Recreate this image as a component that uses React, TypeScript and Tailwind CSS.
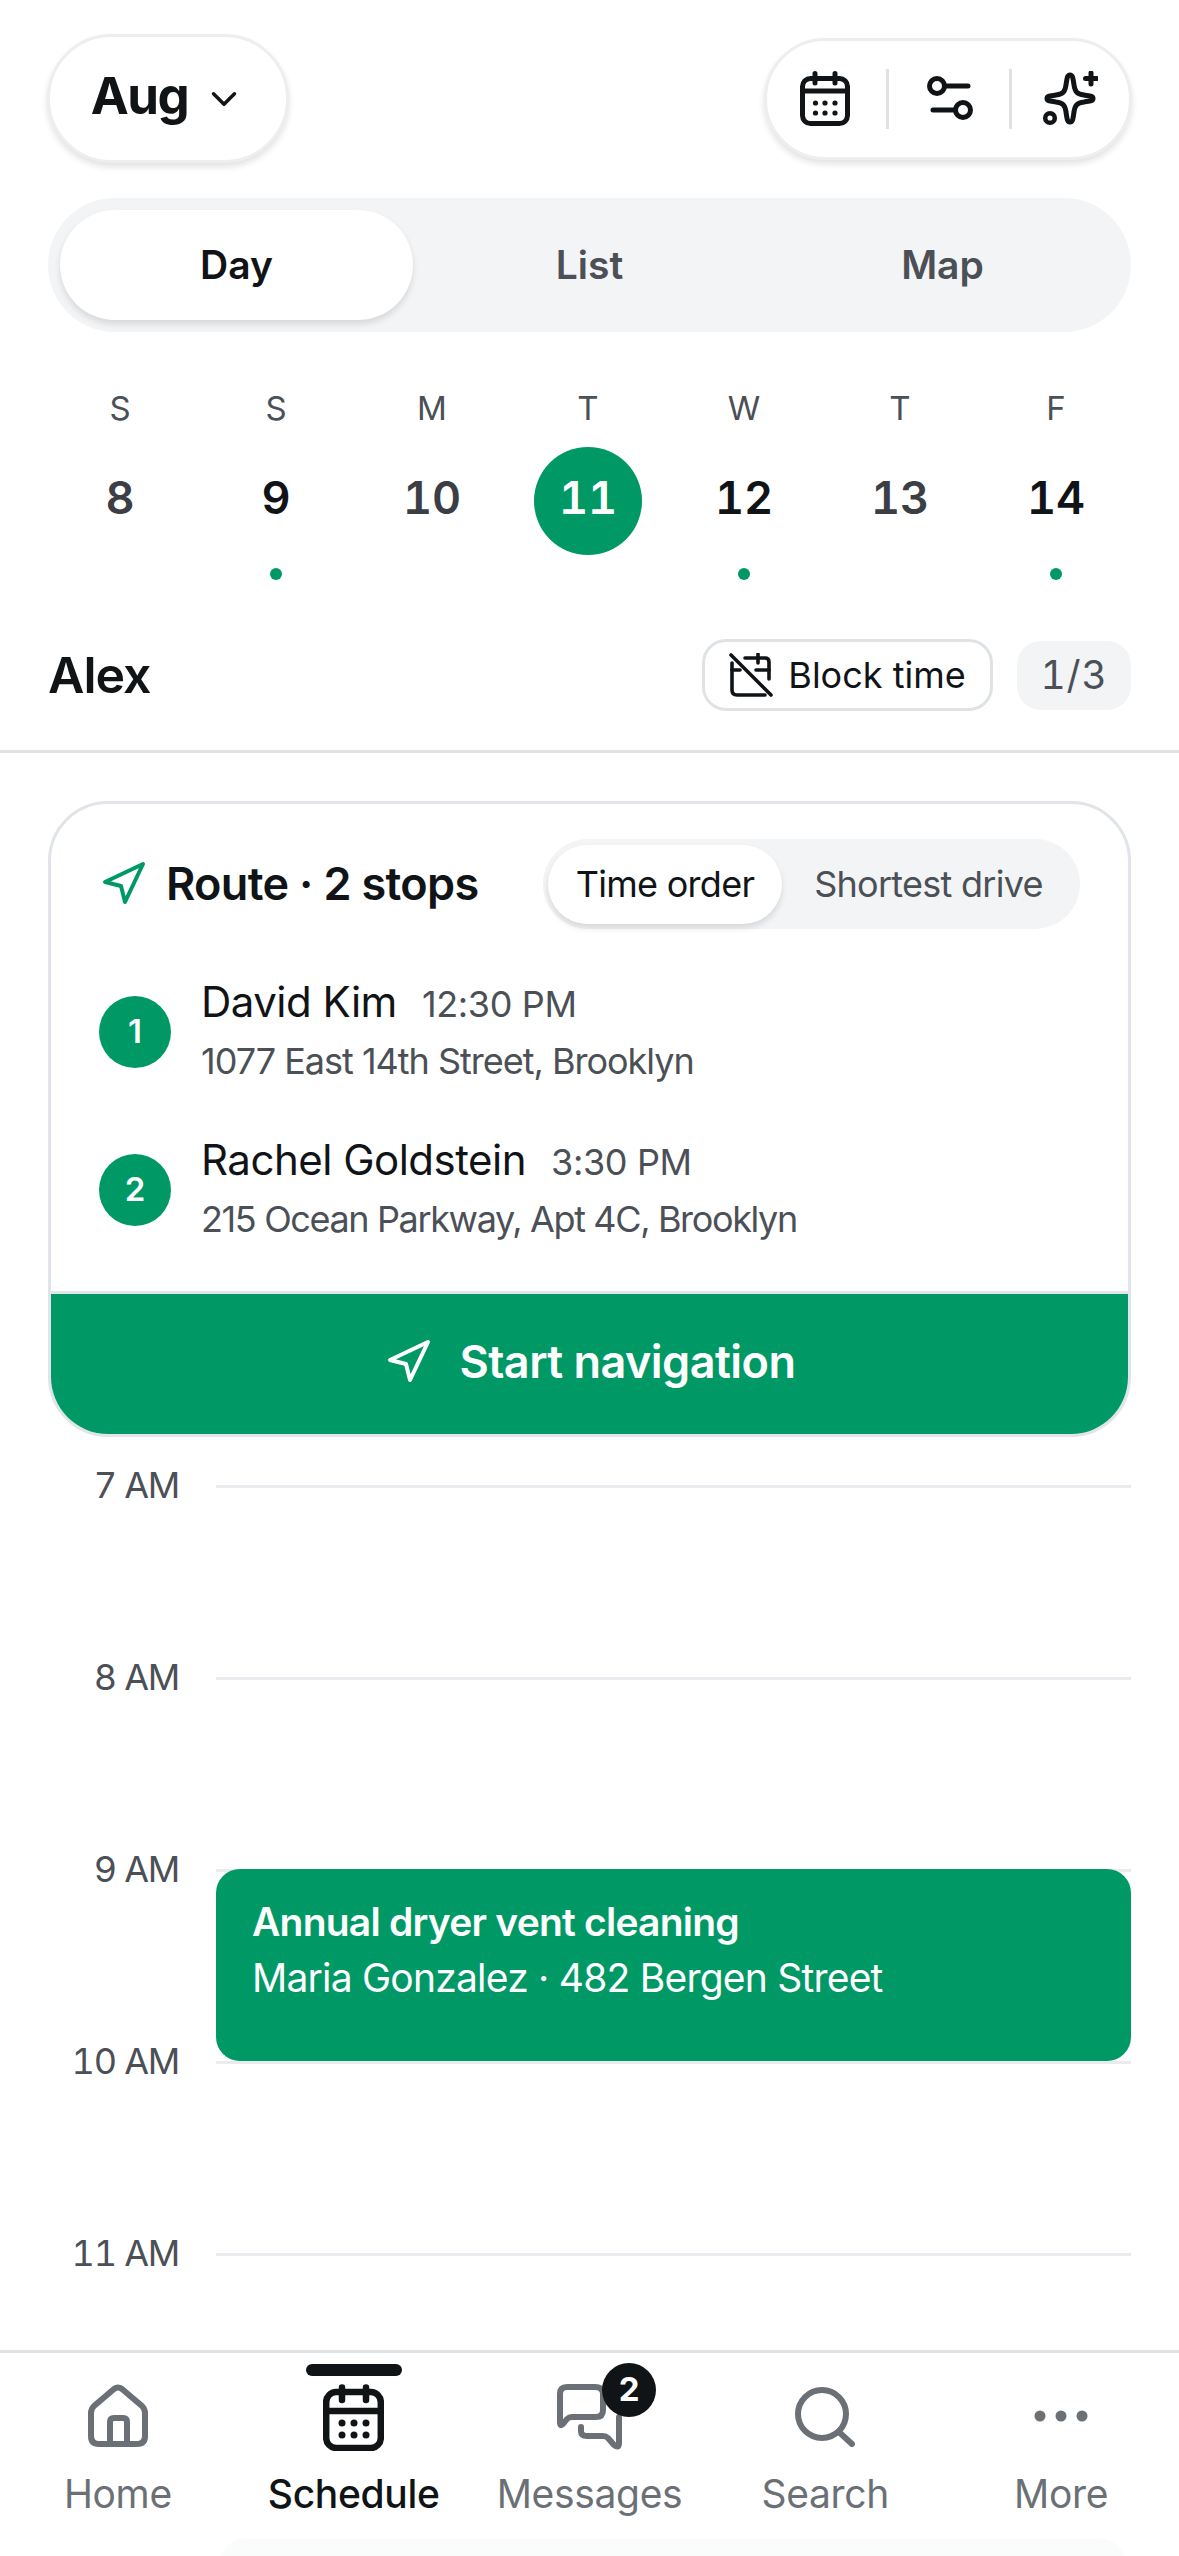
import {ChevronDown, Navigation} from 'lucide-react';

const days = [
    {letter: 'S', date: '8', strong: false, dot: false},
    {letter: 'S', date: '9', strong: true, dot: true},
    {letter: 'M', date: '10', strong: false, dot: false},
    {letter: 'T', date: '11', strong: false, dot: false, today: true},
    {letter: 'W', date: '12', strong: true, dot: true},
    {letter: 'T', date: '13', strong: false, dot: false},
    {letter: 'F', date: '14', strong: true, dot: true},
];

const stops = [
    {n: 1, name: 'David Kim', time: '12:30 PM', address: '1077 East 14th Street, Brooklyn', tracking: 'tracking-[-0.028em]'},
    {n: 2, name: 'Rachel Goldstein', time: '3:30 PM', address: '215 Ocean Parkway, Apt 4C, Brooklyn', tracking: 'tracking-[-0.038em]'},
];

const hours = ['7 AM', '8 AM', '9 AM', '10 AM', '11 AM'];

function CalendarIcon() {
    return (
        <svg width="50" height="55" viewBox="0 0 50 55" fill="none" stroke="#111417" strokeWidth="5" strokeLinecap="round">
            <rect x="2.5" y="7.5" width="45" height="45" rx="8"/>
            <path d="M15 2.5V12M35 2.5V12M2.5 20H47.5"/>
            <g fill="#111417" stroke="none">
                <circle cx="15.5" cy="32" r="2.6"/>
                <circle cx="25" cy="32" r="2.6"/>
                <circle cx="35" cy="32" r="2.6"/>
                <circle cx="15.5" cy="42" r="2.6"/>
                <circle cx="25" cy="42" r="2.6"/>
                <circle cx="35" cy="42" r="2.6"/>
            </g>
        </svg>
    );
}

function SlidersIcon() {
    return (
        <svg width="46" height="55" viewBox="0 0 46 55" fill="none" stroke="#111417" strokeWidth="5" strokeLinecap="round">
            <circle cx="10" cy="15" r="7.5"/>
            <path d="M18 15H41M6 39H28"/>
            <circle cx="36" cy="39" r="7.5"/>
        </svg>
    );
}

function SparkleIcon() {
    return (
        <svg width="56" height="55" viewBox="0 0 56 55" fill="none" stroke="#111417" strokeWidth="5" strokeLinecap="round">
            <path d="M28 4C31 4 31 8 32 14C33 21 35 23 42 24C48 25 51 25 51 27.5C51 30 48 30 42 31C35 32 33 34 32 41C31 47 31 51 28 51C25 51 25 47 24 41C23 34 21 32 14 31C8 30 5 30 5 27.5C5 25 8 25 14 24C21 23 23 21 24 14C25 8 25 4 28 4Z"/>
            <path d="M49 2V13M43.5 7.5H54.5"/>
            <circle cx="8" cy="47" r="4.8" strokeWidth="4.5"/>
        </svg>
    );
}

function BlockIcon() {
    return (
        <svg width="44" height="44" viewBox="0 0 44 44" fill="none" stroke="#111417" strokeWidth="3.6" strokeLinecap="round" strokeLinejoin="round">
            <path d="M2 2L42 42"/>
            <path d="M3 10V37Q3 42 8 42H36"/>
            <path d="M16 5H36Q40 5 40 9V26"/>
            <path d="M29 1V10M3 17H11M27 17H40"/>
        </svg>
    );
}

function HomeIcon() {
    return (
        <svg width="60" height="63" viewBox="0 0 60 63" fill="none" stroke="#6b7076" strokeWidth="6" strokeLinecap="round" strokeLinejoin="round">
            <path d="M26 5Q30 2 34 5L54 22Q57 25 57 29V52Q57 60 49 60H11Q3 60 3 52V29Q3 25 6 22Z"/>
            <path d="M22 60V38Q22 34 26 34H35Q39 34 39 38V60"/>
        </svg>
    );
}

function ScheduleIcon() {
    return (
        <svg width="61" height="67" viewBox="0 0 61 67" fill="none" stroke="#111417" strokeWidth="6.5" strokeLinecap="round">
            <rect x="3.2" y="8" width="54.6" height="56" rx="10"/>
            <path d="M19 3.5V16M43 3.5V16M3.2 27H57.8"/>
            <g fill="#111417" stroke="none">
                <circle cx="19" cy="39" r="3.5"/>
                <circle cx="31" cy="39" r="3.5"/>
                <circle cx="43" cy="39" r="3.5"/>
                <circle cx="19" cy="51" r="3.5"/>
                <circle cx="31" cy="51" r="3.5"/>
                <circle cx="43" cy="51" r="3.5"/>
            </g>
        </svg>
    );
}

function MessagesIcon() {
    return (
        <svg width="65" height="66" viewBox="0 0 65 66" fill="none" stroke="#6b7076" strokeWidth="6" strokeLinecap="round" strokeLinejoin="round">
            <path d="M3 38V10Q3 3 10 3H38Q46 3 46 10V26Q46 33 39 33H15Q12 33 10 35L6 40Q3 43 3 38Z"/>
            <path d="M24 43V47Q24 52 30 52H46Q49 52 51 54L57 61Q62 65 62 59V33"/>
        </svg>
    );
}

function SearchIcon() {
    return (
        <svg width="60" height="60" viewBox="0 0 60 60" fill="none" stroke="#6b7076" strokeWidth="6" strokeLinecap="round">
            <circle cx="27" cy="27" r="24"/>
            <path d="M44 45L57 57"/>
        </svg>
    );
}

function MoreIcon() {
    return (
        <svg width="56" height="14" viewBox="0 0 56 14" fill="#6b7076">
            <circle cx="7" cy="7" r="5.5"/>
            <circle cx="28" cy="7" r="5.5"/>
            <circle cx="49" cy="7" r="5.5"/>
        </svg>
    );
}

function App() {
    return (
        <div className="relative h-[2556px] w-[1179px] overflow-hidden bg-white flex flex-col text-[#111417] font-['Inter',sans-serif]">
            {/* Top bar */}
            <div className="flex justify-between items-center px-[47px] pt-[34px] pr-[47px]">
                <button className="h-[129px] w-[242px] rounded-full bg-white border-[3px] border-[#eceef0] shadow-[0_4px_6px_rgba(17,20,23,0.12)] flex items-center justify-center gap-[15px] pb-[4px]">
                    <span className="text-[51px] font-bold tracking-[-0.03em]">Aug</span>
                    <ChevronDown className="w-[42px] h-[42px] mt-[4px]" strokeWidth={2}/>
                </button>
                <div className="h-[122px] w-[368px] rounded-full bg-white border-[3px] border-[#eceef0] shadow-[0_4px_6px_rgba(17,20,23,0.12)] flex items-center pl-[33px]">
                    <CalendarIcon/>
                    <div className="w-[3px] h-[60px] ml-[36px] mr-[38px] bg-[#dfe2e5]"/>
                    <SlidersIcon/>
                    <div className="w-[3px] h-[60px] ml-[36px] mr-[30px] bg-[#dfe2e5]"/>
                    <SparkleIcon/>
                </div>
            </div>

            {/* View switch */}
            <div className="mx-[48px] mt-[35px] h-[134px] rounded-full bg-[#f3f4f6] p-[12px] grid grid-cols-3 items-center text-center text-[39px] font-semibold text-[#4b5057]">
                <div className="h-[110px] rounded-full bg-white text-[#111417] shadow-[0_4px_6px_rgba(17,20,23,0.12)] flex items-center justify-center">Day</div>
                <div>List</div>
                <div>Map</div>
            </div>

            {/* Week strip */}
            <div className="grid grid-cols-7 ml-[42px] mr-[45px] mt-[52px] text-center">
                {days.map((d, i) => (
                    <div key={i} className="flex flex-col items-center">
                        <div className="text-[33px] leading-[48px] text-[#4b5057]">{d.letter}</div>
                        <div className={`mt-[15px] w-[108px] h-[108px] rounded-full flex items-center justify-center text-[45px] font-semibold tabular-nums pb-[6px] ${d.today ? 'bg-[#009966] text-white' : d.strong ? 'text-[#111417]' : 'text-[#3b3f45]'}`}>
                            {d.date}
                        </div>
                        <div className={`mt-[13px] w-[12px] h-[12px] rounded-full ${d.dot ? 'bg-[#009966]' : ''}`}/>
                    </div>
                ))}
            </div>

            {/* Tech row */}
            <div className="flex items-center px-[48px] mt-[59px] pb-[39px] border-b-[3px] border-[#e0e3e6]">
                <span className="text-[50px] leading-[60px] font-semibold tracking-[-0.02em]">Alex</span>
                <button className="ml-auto h-[72px] w-[291px] rounded-[24px] border-[3px] border-[#e0e3e6] flex items-center justify-center gap-[15px] text-[36px]">
                    <BlockIcon/>
                    Block time
                </button>
                <div className="ml-[24px] h-[69px] w-[114px] rounded-[24px] bg-[#f3f4f6] flex items-center justify-center text-[39px] tabular-nums tracking-[0.02em] text-[#4b5057]">1/3</div>
            </div>

            {/* Scrolling day */}
            <div className="flex-1 overflow-hidden px-[48px] pt-[48px]">
                <div className="rounded-[60px] border-[3px] border-[#e1e4e8] overflow-hidden bg-white">
                    <div className="flex items-center justify-between pl-[48px] pr-[48px] pt-[35px]">
                        <div className="flex items-center gap-[19px]">
                            <Navigation className="w-[48px] h-[48px] text-[#009966]" strokeWidth={2}/>
                            <span className="text-[45px] font-semibold tracking-[-0.015em]">Route · 2 stops</span>
                        </div>
                        <div className="h-[90px] w-[537px] rounded-full bg-[#f3f4f6] p-[5px] flex items-center text-[36px] tracking-[-0.02em]">
                            <div className="h-[79px] w-[234px] rounded-full bg-white shadow-[0_4px_6px_rgba(17,20,23,0.12)] flex items-center justify-center">Time order</div>
                            <div className="flex-1 text-center text-[#4b5057]">Shortest drive</div>
                        </div>
                    </div>
                    <div className="pt-[46px] pb-[45px] pl-[48px] flex flex-col gap-[45px]">
                        {stops.map(s => (
                            <div key={s.n} className="flex items-center gap-[30px]">
                                <div className="w-[72px] h-[72px] rounded-full bg-[#009966] text-white flex items-center justify-center text-[33px] font-semibold">{s.n}</div>
                                <div>
                                    <div className="flex items-baseline gap-[25px] leading-[54px]">
                                        <span className="text-[42px] tracking-[-0.012em]">{s.name}</span>
                                        <span className="text-[36px] tracking-[-0.01em] text-[#4b5057]">{s.time}</span>
                                    </div>
                                    <div className={`text-[36px] leading-[54px] mt-[3px] text-[#4b5057] ${s.tracking}`}>{s.address}</div>
                                </div>
                            </div>
                        ))}
                    </div>
                    <button className="w-full h-[143px] pb-[4px] bg-[#009966] border-t-[3px] border-[#e1e4e8] text-white flex items-center justify-center gap-[28px] text-[45px] font-semibold tracking-[-0.012em]">
                        <Navigation className="w-[48px] h-[48px]" strokeWidth={2}/>
                        Start navigation
                    </button>
                </div>

                {/* Hours */}
                <div className="relative mt-[48px]">
                    {hours.map(h => (
                        <div key={h} className="flex items-start h-[192px]">
                            <div className="w-[131px] -mt-[24px] text-right text-[36px] leading-[48px] tabular-nums tracking-[-0.035em] text-[#4b5057]">{h}</div>
                            <div className="flex-1 ml-[37px] h-[3px] bg-[#e9ebee]"/>
                        </div>
                    ))}
                    <div className="absolute left-[168px] right-0 top-[384px] h-[192px] rounded-[24px] bg-[#009966] text-white px-[36px] pt-[26px]">
                        <div className="text-[39px] leading-[54px] font-semibold tracking-[-0.02em]">Annual dryer vent cleaning</div>
                        <div className="text-[39px] leading-[54px] mt-[2px] tracking-[-0.02em]">Maria Gonzalez · 482 Bergen Street</div>
                    </div>
                </div>
            </div>

            {/* Bottom nav */}
            <nav className="relative h-[206px] border-t-[3px] border-[#e0e3e6] bg-white grid grid-cols-5 tracking-[-0.02em]">
                <div className="absolute left-[220px] right-[54px] top-[186px] h-[30px] rounded-t-[24px] bg-[#fafcfb]"/>
                <div className="relative flex flex-col items-center text-[#6b7076]">
                    <div className="h-[67px] mt-[31px] flex items-start"><HomeIcon/></div>
                    <span className="mt-[19px] text-[39px] leading-[48px]">Home</span>
                </div>
                <div className="relative flex flex-col items-center text-[#111417]">
                    <div className="absolute top-[11px] w-[96px] h-[12px] rounded-full bg-[#111417]"/>
                    <div className="h-[67px] mt-[31px] flex items-start"><ScheduleIcon/></div>
                    <span className="mt-[19px] text-[39px] leading-[48px] font-medium">Schedule</span>
                </div>
                <div className="relative flex flex-col items-center text-[#6b7076]">
                    <div className="relative h-[67px] mt-[31px] flex items-start">
                        <MessagesIcon/>
                        <div className="absolute -top-[21px] left-[45px] w-[54px] h-[54px] rounded-full bg-[#111417] text-white flex items-center justify-center text-[33px] font-bold">2</div>
                    </div>
                    <span className="mt-[19px] text-[39px] leading-[48px]">Messages</span>
                </div>
                <div className="relative flex flex-col items-center text-[#6b7076]">
                    <div className="h-[67px] mt-[31px] pt-[3px] flex items-start"><SearchIcon/></div>
                    <span className="mt-[19px] text-[39px] leading-[48px]">Search</span>
                </div>
                <div className="relative flex flex-col items-center text-[#6b7076]">
                    <div className="h-[67px] mt-[31px] pt-[25px] flex items-start"><MoreIcon/></div>
                    <span className="mt-[19px] text-[39px] leading-[48px]">More</span>
                </div>
            </nav>
        </div>
    );
}

export default App;
